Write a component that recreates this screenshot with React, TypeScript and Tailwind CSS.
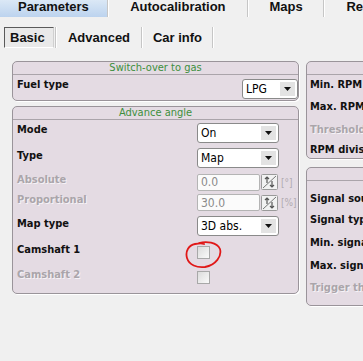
import React from "react";

const lbl = "font-['DejaVu_Sans_Condensed','DejaVu_Sans',sans-serif]";

function Panel({ title, className, children }: { title?: string; className?: string; children?: React.ReactNode }) {
  return (
    <div className={`rounded-[5px] border border-[#9a949a] bg-[#e4dbe3] shadow-[1px_1px_0_#ffffff] overflow-hidden ${className ?? ""}`}>
      <div className={`h-[13px] border-b border-[#aaa4aa] text-center text-[11px] leading-[12px] text-[#3d8f3d] ${lbl}`}>{title}</div>
      {children}
    </div>
  );
}

function Select({ value, w }: { value: string; w: number }) {
  return (
    <div
      className={`flex h-[20px] items-stretch rounded-[3px] border border-[#8a8a8a] bg-white ${lbl}`}
      style={{ width: w }}
    >
      <div className="flex flex-1 items-center pl-[3px] text-[12px] text-black">{value}</div>
      <div className="my-[2px] mr-[2px] flex w-[15px] items-center justify-center bg-[#e3e3e3]">
        <svg width="7" height="4" viewBox="0 0 7 4"><path d="M0 0h7L3.5 4z" fill="#111" /></svg>
      </div>
    </div>
  );
}

function Spin() {
  return (
    <svg width="17" height="16" viewBox="0 0 17 16">
      <rect x="0.5" y="0.5" width="16" height="15" rx="1" fill="#f2f2f2" stroke="#9a9a9a" />
      <path d="M2 14L15 2" stroke="#777" strokeWidth="1" />
      <path d="M6 9V3M4 5l2-2 2 2" stroke="#555" strokeWidth="1.2" fill="none" />
      <path d="M11 7v6M9 11l2 2 2-2" stroke="#555" strokeWidth="1.2" fill="none" />
    </svg>
  );
}

function NumInput({ value, unit }: { value: string; unit: string }) {
  return (
    <div className={`flex items-center ${lbl}`}>
      <div className="flex h-[17px] w-[63px] items-center rounded-[2px] border border-[#b4b4b4] bg-[#fbfbfb] pl-[3px] text-[12px] text-[#8a8a8a]">
        {value}
      </div>
      <div className="ml-[1px]"><Spin /></div>
      <div className="ml-[3px] text-[10px] text-[#b0aab0]">{unit}</div>
    </div>
  );
}

function Check() {
  return <div className="h-[13px] w-[13px] border border-[#a8a8a8] bg-gradient-to-br from-[#dcdcdc] to-[#fafafa]" />;
}

function Row({ label, h, disabled, children }: { label: string; h: number; disabled?: boolean; children?: React.ReactNode }) {
  return (
    <div className="flex items-center" style={{ height: h }}>
      <div
        className={`w-[184px] pl-[4px] pb-[4px] text-[11px] font-bold ${lbl} ${disabled ? "text-[#aaa5aa] [text-shadow:1px_1px_0_#f6f2f6]" : "text-[#111]"}`}
      >
        {label}
      </div>
      {children}
    </div>
  );
}

function RLabel({ label, h, disabled }: { label: string; h: number; disabled?: boolean }) {
  return (
    <div
      className={`flex items-center whitespace-nowrap pl-[3px] text-[11px] font-bold ${lbl} ${disabled ? "text-[#aaa5aa] [text-shadow:1px_1px_0_#f6f2f6]" : "text-[#111]"}`}
      style={{ height: h }}
    >
      {label}
    </div>
  );
}

export default function App() {
  const tab = "font-['Liberation_Sans',Arial,sans-serif] text-[13px] font-bold text-[#111]";
  return (
    <div className="relative h-[361px] w-[363px] overflow-hidden bg-[#f0f0f0]">
      {/* Top tabs */}
      <div className={`flex h-[18px] items-start ${tab}`}>
        <div className="flex h-[17px] w-[109px] justify-center bg-gradient-to-b from-[#dbe8f6] to-[#bcd3ee] leading-[13px]">Parameters</div>
        <div className="h-[17px] w-[2px] border-l border-r border-l-[#c6c6c6] border-r-white" />
        <div className="flex w-[141px] justify-center leading-[13px]">Autocalibration</div>
        <div className="h-[17px] w-[2px] border-l border-r border-l-[#c6c6c6] border-r-white" />
        <div className="flex w-[76px] justify-center leading-[13px]">Maps</div>
        <div className="h-[17px] w-[2px] border-l border-r border-l-[#c6c6c6] border-r-white" />
        <div className="pl-[21px] leading-[13px]">Re</div>
      </div>

      {/* Sub tabs */}
      <div className={`mt-[9px] flex h-[21px] items-center pl-[4px] ${tab}`}>
        <div className="flex h-[21px] w-[50px] items-center border border-t-[#5a5a5a] border-l-[#5a5a5a] border-r-[#d0d0d0] border-b-[#ffffff] bg-[#e9e9e9] pl-[5px]">
          Basic
        </div>
        <div className="ml-[1px] h-[21px] w-[2px] border-l border-r border-l-[#c6c6c6] border-r-white" />
        <div className="flex w-[84px] justify-center">Advanced</div>
        <div className="h-[21px] w-[2px] border-l border-r border-l-[#c6c6c6] border-r-white" />
        <div className="flex w-[69px] justify-center">Car info</div>
        <div className="h-[21px] w-[2px] border-l border-r border-l-[#c6c6c6] border-r-white" />
      </div>

      {/* Content */}
      <div className="mt-[13px] flex items-start gap-[7px] pl-[12px]">
        <div className="flex w-[290px] flex-col gap-[5px]">
          <Panel title="Switch-over to gas" className="h-[40px]">
            <Row label="Fuel type" h={25}>
              <div className="ml-[45px] pt-[2px]"><Select value="LPG" w={56} /></div>
            </Row>
          </Panel>
          <Panel title="Advance angle" className="h-[188px]">
            <Row label="Mode" h={25}><Select value="On" w={82} /></Row>
            <Row label="Type" h={26}><Select value="Map" w={82} /></Row>
            <Row label="Absolute" h={22} disabled><NumInput value="0.0" unit="[°]" /></Row>
            <Row label="Proportional" h={19} disabled><NumInput value="30.0" unit="[%]" /></Row>
            <Row label="Map type" h={28}><Select value="3D abs." w={82} /></Row>
            <Row label="Camshaft 1" h={25}>
              <div className="relative">
                <Check />
                <svg className="absolute left-[-12px] top-[-6px]" width="38" height="30" viewBox="0 0 38 30">
                  <path
                    d="M14 3C21 1 32 2 35 9C37 16 31 25 20 27C12 28 4 25 2 18C0 11 4 5 10 4C13 3.5 17 3 19 4"
                    fill="none"
                    stroke="#e01818"
                    strokeWidth="1.8"
                    strokeLinecap="round"
                  />
                </svg>
              </div>
            </Row>
            <Row label="Camshaft 2" h={25} disabled><Check /></Row>
          </Panel>
        </div>
        <div className="flex w-[70px] flex-col gap-[8px]">
          <Panel className="h-[98px] w-[80px]">
            <RLabel label="Min. RPM" h={20} />
            <RLabel label="Max. RPM" h={25} />
            <RLabel label="Threshold" h={20} disabled />
            <RLabel label="RPM division" h={21} />
          </Panel>
          <Panel className="h-[139px] w-[80px]">
            <div className="h-[8px]" />
            <RLabel label="Signal source" h={21} />
            <RLabel label="Signal type" h={21} />
            <RLabel label="Min. signal" h={25} />
            <RLabel label="Max. signal" h={21} />
            <RLabel label="Trigger threshold" h={23} disabled />
          </Panel>
        </div>
      </div>
    </div>
  );
}
